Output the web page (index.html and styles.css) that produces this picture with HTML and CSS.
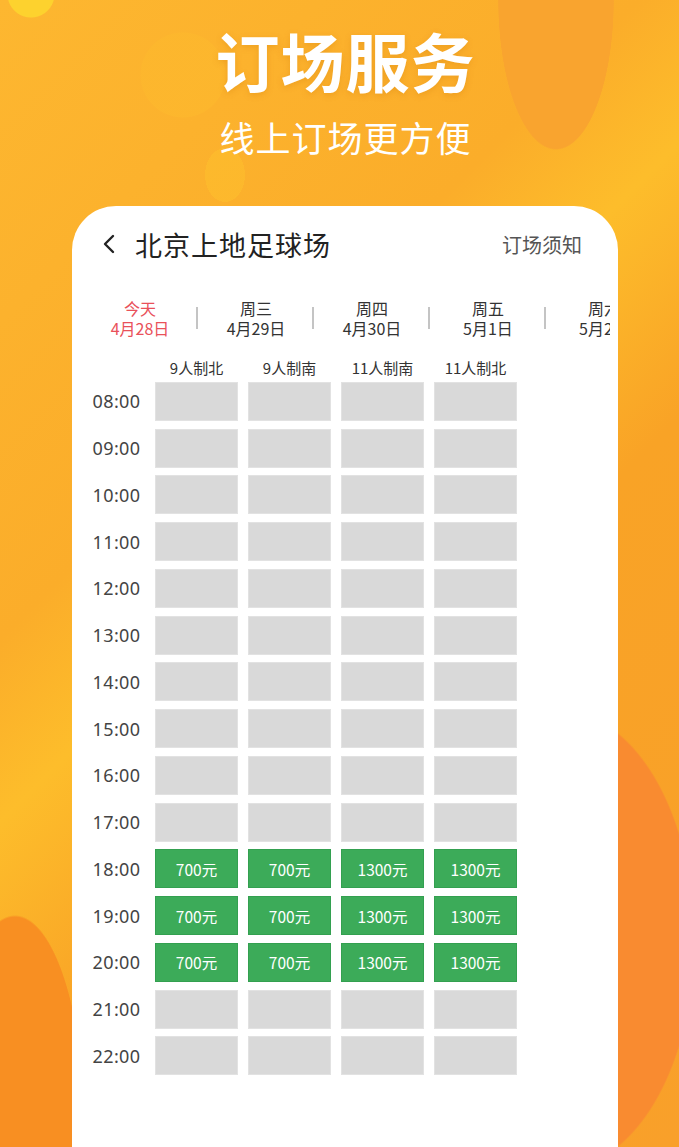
FILE: index.html
```html
<!DOCTYPE html>
<html lang="zh-CN">
<head>
<meta charset="utf-8">
<title>订场服务</title>
<link rel="stylesheet" href="styles.css">
</head>
<body>
<div class="page">
  <header class="hero">
    <h1 class="hero-title">订场服务</h1>
    <p class="hero-sub">线上订场更方便</p>
  </header>
  <main class="card">
    <div class="topbar">
      <div class="topbar-left">
        <svg class="back" width="14" height="20" viewBox="0 0 14 20"><polyline points="11,2 3,10 11,18" fill="none" stroke="#222" stroke-width="2.4" stroke-linecap="round" stroke-linejoin="round"/></svg>
        <span class="venue">北京上地足球场</span>
      </div>
      <span class="notice">订场须知</span>
    </div>
    <div class="tabs">
      <div class="tab active"><span>今天</span><span>4月28日</span></div>
      <div class="tab"><span>周三</span><span>4月29日</span></div>
      <div class="tab"><span>周四</span><span>4月30日</span></div>
      <div class="tab"><span>周五</span><span>5月1日</span></div>
      <div class="tab"><span>周六</span><span>5月2日</span></div>
    </div>
    <div class="grid">
      <div class="time"></div>
      <div class="colhead">9人制北</div>
      <div class="colhead">9人制南</div>
      <div class="colhead">11人制南</div>
      <div class="colhead">11人制北</div>

      <div class="time">08:00</div><div class="cell"></div><div class="cell"></div><div class="cell"></div><div class="cell"></div>
      <div class="time">09:00</div><div class="cell"></div><div class="cell"></div><div class="cell"></div><div class="cell"></div>
      <div class="time">10:00</div><div class="cell"></div><div class="cell"></div><div class="cell"></div><div class="cell"></div>
      <div class="time">11:00</div><div class="cell"></div><div class="cell"></div><div class="cell"></div><div class="cell"></div>
      <div class="time">12:00</div><div class="cell"></div><div class="cell"></div><div class="cell"></div><div class="cell"></div>
      <div class="time">13:00</div><div class="cell"></div><div class="cell"></div><div class="cell"></div><div class="cell"></div>
      <div class="time">14:00</div><div class="cell"></div><div class="cell"></div><div class="cell"></div><div class="cell"></div>
      <div class="time">15:00</div><div class="cell"></div><div class="cell"></div><div class="cell"></div><div class="cell"></div>
      <div class="time">16:00</div><div class="cell"></div><div class="cell"></div><div class="cell"></div><div class="cell"></div>
      <div class="time">17:00</div><div class="cell"></div><div class="cell"></div><div class="cell"></div><div class="cell"></div>
      <div class="time">18:00</div><div class="cell on">700元</div><div class="cell on">700元</div><div class="cell on">1300元</div><div class="cell on">1300元</div>
      <div class="time">19:00</div><div class="cell on">700元</div><div class="cell on">700元</div><div class="cell on">1300元</div><div class="cell on">1300元</div>
      <div class="time">20:00</div><div class="cell on">700元</div><div class="cell on">700元</div><div class="cell on">1300元</div><div class="cell on">1300元</div>
      <div class="time">21:00</div><div class="cell"></div><div class="cell"></div><div class="cell"></div><div class="cell"></div>
      <div class="time">22:00</div><div class="cell"></div><div class="cell"></div><div class="cell"></div><div class="cell"></div>
    </div>
  </main>
</div>
</body>
</html>
```
FILE: styles.css
```css
html, body {
  margin: 0;
  padding: 0;
}
body {
  width: 679px;
  height: 1147px;
  overflow: hidden;
  font-family: "Noto Sans CJK SC", "Noto Sans", sans-serif;
}
.page {
  width: 679px;
  height: 1147px;
  display: flex;
  flex-direction: column;
  background:
    radial-gradient(circle at 31px -6px, #fdd22e 0 23px, transparent 24px),
    radial-gradient(ellipse 58px 150px at 556px 0px, #f9a42f 0 99%, transparent 100%),
    radial-gradient(ellipse 20px 27px at 225px 175px, rgba(255,200,45,0.35) 0 99%, transparent 100%),
    radial-gradient(circle at 183px 75px, rgba(253,185,45,0.6) 0 42px, transparent 43px),
    radial-gradient(ellipse 70px 215px at 15px 1130px, #f88f22 0 99%, transparent 100%),
    radial-gradient(ellipse 135px 230px at 560px 940px, #f98b30 0 99%, transparent 100%),
    linear-gradient(135deg, #fdb730 0%, #fbad2a 35%, #fdbd2b 45%, #f9a326 60%, #f9a02a 100%);
}
.hero {
  text-align: center;
  padding-left: 12px;
  padding-top: 21px;
  height: 206px;
  flex: 0 0 206px;
  box-sizing: border-box;
  color: #fff;
}
.hero-title {
  margin: 0;
  font-size: 64px;
  line-height: 76px;
  font-weight: 700;
  letter-spacing: 1px;
  text-shadow: 0 2px 6px rgba(200, 110, 0, 0.25);
}
.hero-sub {
  margin: 18px 0 0;
  font-size: 35px;
  line-height: 44px;
  font-weight: 400;
  letter-spacing: 1px;
}
.card {
  margin-left: 72px;
  width: 546px;
  flex: 1;
  background: #fff;
  border-radius: 44px 44px 0 0;
  overflow: hidden;
}
.topbar {
  display: flex;
  justify-content: space-between;
  align-items: center;
  height: 40px;
  margin-top: 18px;
  padding: 0 36px 0 30px;
}
.topbar-left {
  display: flex;
  align-items: center;
  gap: 19px;
}
.back {
  display: block;
}
.venue {
  font-size: 27px;
  color: #222;
  letter-spacing: 1px;
}
.notice {
  font-size: 20px;
  color: #555;
}
.tabs {
  display: flex;
  margin-top: 34px;
  margin-left: 10px;
  width: 528px;
  overflow: hidden;
}
.tab {
  flex: 0 0 116px;
  display: flex;
  flex-direction: column;
  align-items: center;
  font-size: 16px;
  line-height: 20px;
  color: #333;
  position: relative;
}
.tab + .tab::before {
  content: "";
  position: absolute;
  left: -2px;
  top: 9px;
  width: 2px;
  height: 22px;
  background: #c4c4c4;
}
.tab.active {
  color: #e9515a;
}
.grid {
  display: grid;
  grid-template-columns: 60px repeat(4, 83px);
  grid-template-rows: 17px repeat(15, 39px);
  column-gap: 10px;
  row-gap: 7.75px;
  margin-top: 19px;
  margin-left: 13px;
}
.colhead {
  font-size: 15px;
  color: #333;
  text-align: center;
  line-height: 22px;
  height: 22px;
}
.time {
  font-size: 18px;
  letter-spacing: 0.4px;
  color: #444;
  display: flex;
  align-items: center;
  justify-content: center;
  font-family: "Noto Sans", "Noto Sans CJK SC", sans-serif;
  margin-right: -3px;
}
.cell {
  background: #d9d9d9;
  border: 1px solid #e2e2e2;
  box-sizing: border-box;
  display: flex;
  align-items: center;
  justify-content: center;
  color: #fff;
  font-size: 15.5px;
}
.cell.on {
  background: #3cab59;
  border-color: #33a050;
}
```
